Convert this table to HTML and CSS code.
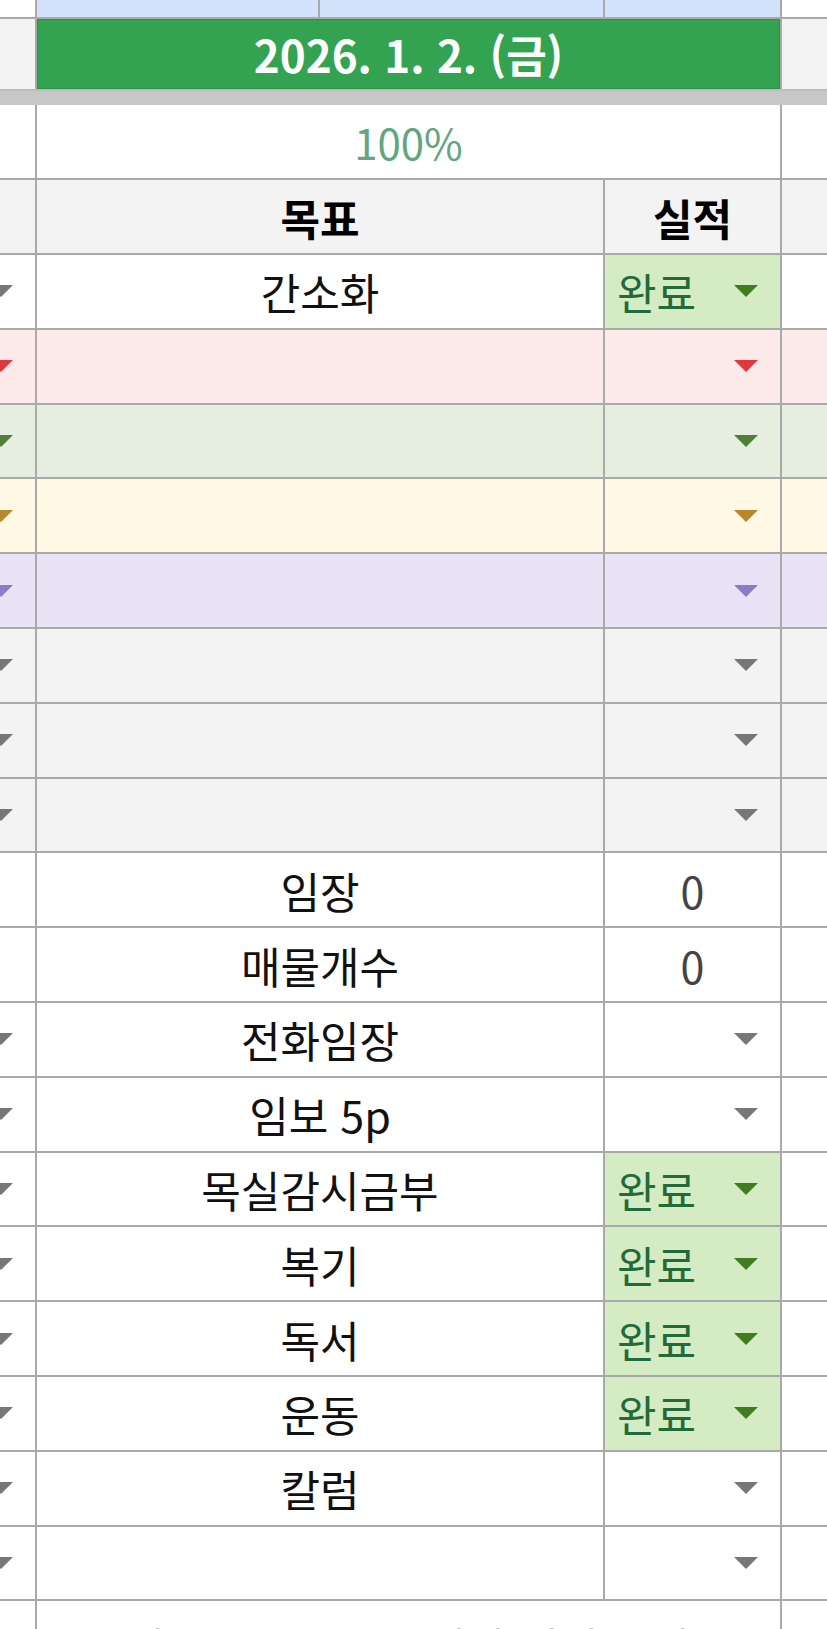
FILE: index.html
```html
<!DOCTYPE html>
<html lang="ko">
<head>
<meta charset="utf-8">
<title>Sheet</title>
<link rel="stylesheet" href="styles.css">
</head>
<body>
<div class="sheet">
  <div class="row top">
    <div class="c a"></div>
    <div class="c b split"><div class="half"></div><div class="half last"></div></div>
    <div class="c cc blue"></div>
    <div class="c d"></div>
  </div>
  <div class="row date">
    <div class="c a gray"></div>
    <div class="c merged green-cell">2026. 1. 2. (금)</div>
    <div class="c d gray"></div>
  </div>
  <div class="band"></div>
  <div class="row std">
    <div class="c a"></div>
    <div class="c merged pct">100%</div>
    <div class="c d"></div>
  </div>
  <div class="row std head">
    <div class="c a"></div>
    <div class="c b center bold">목표</div>
    <div class="c cc center bold">실적</div>
    <div class="c d"></div>
  </div>

  <div class="row data">
    <div class="c a dd t-gray"><svg class="tri" viewBox="0 0 24 12"><path d="M0 0H24L12 12Z"/></svg></div>
    <div class="c b center">간소화</div>
    <div class="c cc done"><span>완료</span><svg class="tri" viewBox="0 0 24 12"><path d="M0 0H24L12 12Z"/></svg></div>
    <div class="c d"></div>
  </div>
  <div class="row data pink">
    <div class="c a dd t-red"><svg class="tri" viewBox="0 0 24 12"><path d="M0 0H24L12 12Z"/></svg></div>
    <div class="c b"></div>
    <div class="c cc dd t-red"><svg class="tri" viewBox="0 0 24 12"><path d="M0 0H24L12 12Z"/></svg></div>
    <div class="c d"></div>
  </div>
  <div class="row data lgreen">
    <div class="c a dd t-green"><svg class="tri" viewBox="0 0 24 12"><path d="M0 0H24L12 12Z"/></svg></div>
    <div class="c b"></div>
    <div class="c cc dd t-green"><svg class="tri" viewBox="0 0 24 12"><path d="M0 0H24L12 12Z"/></svg></div>
    <div class="c d"></div>
  </div>
  <div class="row data yellow">
    <div class="c a dd t-gold"><svg class="tri" viewBox="0 0 24 12"><path d="M0 0H24L12 12Z"/></svg></div>
    <div class="c b"></div>
    <div class="c cc dd t-gold"><svg class="tri" viewBox="0 0 24 12"><path d="M0 0H24L12 12Z"/></svg></div>
    <div class="c d"></div>
  </div>
  <div class="row data purple">
    <div class="c a dd t-purple"><svg class="tri" viewBox="0 0 24 12"><path d="M0 0H24L12 12Z"/></svg></div>
    <div class="c b"></div>
    <div class="c cc dd t-purple"><svg class="tri" viewBox="0 0 24 12"><path d="M0 0H24L12 12Z"/></svg></div>
    <div class="c d"></div>
  </div>
  <div class="row data grayrow">
    <div class="c a dd t-gray"><svg class="tri" viewBox="0 0 24 12"><path d="M0 0H24L12 12Z"/></svg></div>
    <div class="c b"></div>
    <div class="c cc dd t-gray"><svg class="tri" viewBox="0 0 24 12"><path d="M0 0H24L12 12Z"/></svg></div>
    <div class="c d"></div>
  </div>
  <div class="row data grayrow">
    <div class="c a dd t-gray"><svg class="tri" viewBox="0 0 24 12"><path d="M0 0H24L12 12Z"/></svg></div>
    <div class="c b"></div>
    <div class="c cc dd t-gray"><svg class="tri" viewBox="0 0 24 12"><path d="M0 0H24L12 12Z"/></svg></div>
    <div class="c d"></div>
  </div>
  <div class="row data grayrow">
    <div class="c a dd t-gray"><svg class="tri" viewBox="0 0 24 12"><path d="M0 0H24L12 12Z"/></svg></div>
    <div class="c b"></div>
    <div class="c cc dd t-gray"><svg class="tri" viewBox="0 0 24 12"><path d="M0 0H24L12 12Z"/></svg></div>
    <div class="c d"></div>
  </div>
  <div class="row data">
    <div class="c a"></div>
    <div class="c b center">임장</div>
    <div class="c cc center num">0</div>
    <div class="c d"></div>
  </div>
  <div class="row data">
    <div class="c a"></div>
    <div class="c b center">매물개수</div>
    <div class="c cc center num">0</div>
    <div class="c d"></div>
  </div>
  <div class="row data">
    <div class="c a dd t-gray"><svg class="tri" viewBox="0 0 24 12"><path d="M0 0H24L12 12Z"/></svg></div>
    <div class="c b center">전화임장</div>
    <div class="c cc dd t-gray"><svg class="tri" viewBox="0 0 24 12"><path d="M0 0H24L12 12Z"/></svg></div>
    <div class="c d"></div>
  </div>
  <div class="row data">
    <div class="c a dd t-gray"><svg class="tri" viewBox="0 0 24 12"><path d="M0 0H24L12 12Z"/></svg></div>
    <div class="c b center">임보 5p</div>
    <div class="c cc dd t-gray"><svg class="tri" viewBox="0 0 24 12"><path d="M0 0H24L12 12Z"/></svg></div>
    <div class="c d"></div>
  </div>
  <div class="row data">
    <div class="c a dd t-gray"><svg class="tri" viewBox="0 0 24 12"><path d="M0 0H24L12 12Z"/></svg></div>
    <div class="c b center">목실감시금부</div>
    <div class="c cc done"><span>완료</span><svg class="tri" viewBox="0 0 24 12"><path d="M0 0H24L12 12Z"/></svg></div>
    <div class="c d"></div>
  </div>
  <div class="row data">
    <div class="c a dd t-gray"><svg class="tri" viewBox="0 0 24 12"><path d="M0 0H24L12 12Z"/></svg></div>
    <div class="c b center">복기</div>
    <div class="c cc done"><span>완료</span><svg class="tri" viewBox="0 0 24 12"><path d="M0 0H24L12 12Z"/></svg></div>
    <div class="c d"></div>
  </div>
  <div class="row data">
    <div class="c a dd t-gray"><svg class="tri" viewBox="0 0 24 12"><path d="M0 0H24L12 12Z"/></svg></div>
    <div class="c b center">독서</div>
    <div class="c cc done"><span>완료</span><svg class="tri" viewBox="0 0 24 12"><path d="M0 0H24L12 12Z"/></svg></div>
    <div class="c d"></div>
  </div>
  <div class="row data">
    <div class="c a dd t-gray"><svg class="tri" viewBox="0 0 24 12"><path d="M0 0H24L12 12Z"/></svg></div>
    <div class="c b center">운동</div>
    <div class="c cc done"><span>완료</span><svg class="tri" viewBox="0 0 24 12"><path d="M0 0H24L12 12Z"/></svg></div>
    <div class="c d"></div>
  </div>
  <div class="row data">
    <div class="c a dd t-gray"><svg class="tri" viewBox="0 0 24 12"><path d="M0 0H24L12 12Z"/></svg></div>
    <div class="c b center">칼럼</div>
    <div class="c cc dd t-gray"><svg class="tri" viewBox="0 0 24 12"><path d="M0 0H24L12 12Z"/></svg></div>
    <div class="c d"></div>
  </div>
  <div class="row data">
    <div class="c a dd t-gray"><svg class="tri" viewBox="0 0 24 12"><path d="M0 0H24L12 12Z"/></svg></div>
    <div class="c b"></div>
    <div class="c cc dd t-gray"><svg class="tri" viewBox="0 0 24 12"><path d="M0 0H24L12 12Z"/></svg></div>
    <div class="c d"></div>
  </div>
  <div class="row data">
    <div class="c a"></div>
    <div class="c merged center last-text">하루를 돌아보며 감사 일기 작성</div>
    <div class="c d"></div>
  </div>
</div>
</body>
</html>
```

FILE: styles.css
```css
* { box-sizing: border-box; }

html, body {
  margin: 0;
  padding: 0;
  background: #ffffff;
  overflow: hidden;
}

body {
  width: 827px;
  height: 1629px;
  font-family: "Noto Sans CJK KR", "Noto Sans", sans-serif;
  font-size: 43px;
  color: #111111;
}

.sheet {
  width: 827px;
  overflow: hidden;
}

.row {
  display: grid;
  grid-template-columns: 37px 568px 177px 45px;
  border-bottom: 2px solid #a9a9a9;
}

.c {
  border-right: 2px solid #a9a9a9;
  display: flex;
  align-items: center;
  overflow: hidden;
  white-space: nowrap;
  min-width: 0;
}

.c.d { border-right: none; }

.merged { grid-column: 2 / 4; justify-content: center; }

.center { justify-content: center; }

.bold { font-weight: 700; color: #000; }

/* top partial blue row */
.row.top { height: 19px; }
.split { display: grid; grid-template-columns: 283px 1fr; }
.half { background: #d3e2fb; border-right: 2px solid #a9a9a9; height: 100%; }
.half.last { border-right: none; }
.blue { background: #d3e2fb; }

/* date row */
.row.date { height: 70px; border-bottom: none; }
.gray { background: #f3f3f3; }
.green-cell {
  background: #33a352;
  color: #ffffff;
  font-weight: 700;
  font-size: 44px;
  letter-spacing: 0;
  box-shadow: inset 0 0 0 1px #2b9146;
}

.band {
  height: 16px;
  background: #c7c7c7;
  border-top: 2px solid #bcbcbc;
}

.row.std { height: 75px; }
.pct { color: #62a67f; font-size: 42px; }

.head { background: #f3f3f3; }

.row.data { height: 74.8px; }

.pink { background: #fce9ea; }
.lgreen { background: #e5eedf; }
.yellow { background: #fef8e5; }
.purple { background: #e8e4f6; }
.grayrow { background: #f3f3f3; }

.dd { justify-content: flex-end; padding-right: 22px; }

.tri { width: 24px; height: 12px; flex: none; fill: currentColor; }

.t-gray { color: #777777; }
.t-red { color: #e0383f; }
.t-green { color: #4f7f39; }
.t-gold { color: #b8862c; }
.t-purple { color: #8c7cc8; }

.done {
  background: #d4ebc3;
  color: #236a3a;
  justify-content: space-between;
  padding-left: 12px;
  padding-right: 22px;
}
.done .tri { color: #3f7c22; }

.num { color: #444444; }

.last-text { align-items: flex-start; padding-top: 14px; }
```
